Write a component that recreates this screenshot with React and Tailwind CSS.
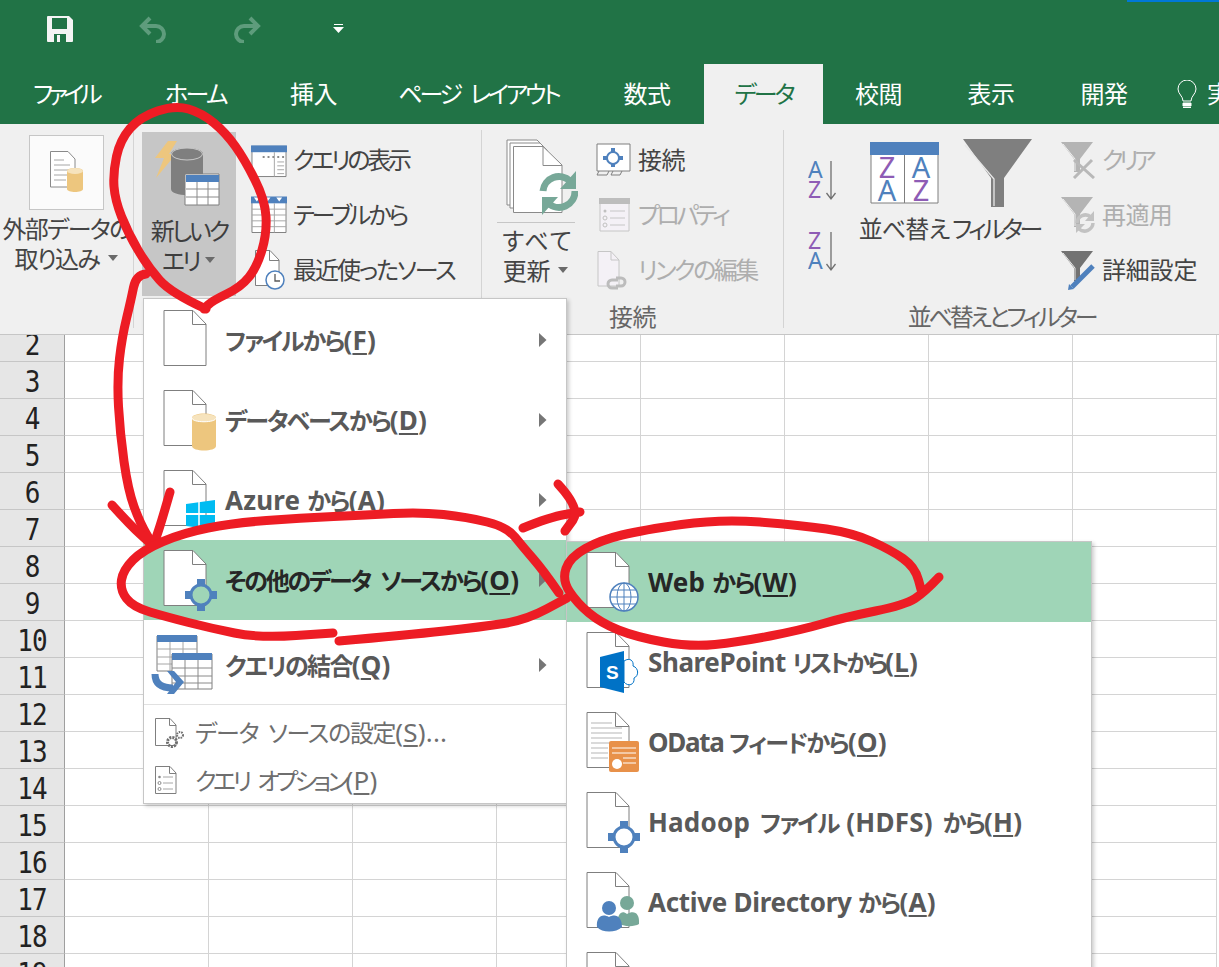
import React from "react";

const FONT = "font-['Noto_Sans','Noto_Sans_CJK_JP',sans-serif] [font-feature-settings:'palt']";
const ROWS = [2, 3, 4, 5, 6, 7, 8, 9, 10, 11, 12, 13, 14, 15, 16, 17, 18, 19];
const COLS = [0, 1, 2, 3, 4, 5, 6, 7];
const TABS = [
  { label: "ファイル", w: "w-[131px]", tr: "tracking-[-4.500px]" },
  { label: "ホーム", w: "w-[129px]", tr: "tracking-[-2.500px]" },
  { label: "挿入", w: "w-[107px]", tr: "tracking-[-0.6px]" },
  { label: "ページ レイアウト", w: "w-[223px]", tr: "tracking-[-3.200px] [word-spacing:7px]" },
  { label: "数式", w: "w-[114px]", tr: "tracking-[-0.6px]" },
  { label: "データ", w: "w-[119px]", tr: "tracking-[-3px]", active: true },
  { label: "校閲", w: "w-[111px]", tr: "tracking-[-0.6px]" },
  { label: "表示", w: "w-[114px]", tr: "tracking-[-0.6px]" },
  { label: "開発", w: "w-[112px]", tr: "tracking-[-0.6px]" },
];

// smooth line through hand-picked points, for the red marker strokes
const smooth = (pts) => {
  let d = `M${pts[0][0]} ${pts[0][1]}`;
  for (let i = 1; i < pts.length - 1; i++) {
    const mx = (pts[i][0] + pts[i + 1][0]) / 2;
    const my = (pts[i][1] + pts[i + 1][1]) / 2;
    d += ` Q${pts[i][0]} ${pts[i][1]} ${mx} ${my}`;
  }
  const last = pts[pts.length - 1];
  return `${d} L${last[0]} ${last[1]}`;
};

const STROKES = [
  [[206, 309], [171, 293], [148, 267], [128, 233], [115, 200], [113, 173], [120, 140], [140, 117], [175, 105], [202, 113], [226, 133], [245, 160], [265, 200], [267, 233], [257, 267], [241, 287], [212, 301], [204, 309]],
  [[146, 274], [136, 275], [131, 300], [122, 337], [117, 380], [120, 433], [128, 490], [140, 523], [153, 545]],
  [[112, 505], [130, 525], [152, 545]],
  [[170, 492], [162, 520], [155, 541]],
  [[559, 593], [543, 570], [523, 547], [507, 527], [467, 517], [420, 512], [367, 515], [300, 518], [233, 523], [183, 533], [143, 550], [123, 570], [120, 590], [133, 607], [167, 617], [210, 628], [259, 638], [333, 633]],
  [[339, 641], [407, 635], [481, 627], [526, 620], [567, 598]],
  [[523, 528], [550, 517], [580, 512]],
  [[558, 484], [581, 509], [565, 531]],
  [[939, 577], [925, 592], [905, 605], [846, 617], [801, 630], [739, 642], [691, 647], [636, 637], [601, 623], [577, 603], [562, 580], [570, 557], [601, 540], [643, 530], [720, 519], [800, 525], [853, 533], [891, 550], [915, 567], [922, 593]],
];

const Tri = ({ className = "" }) => (
  <svg width="12" height="7" viewBox="0 0 12 7" className={`inline-block ${className}`}>
    <path d="M1 0H11L6 6Z" fill="#6a6a6a" />
  </svg>
);

const Arrow = () => (
  <svg width="8" height="14" viewBox="0 0 8 14" className="ml-auto mr-[19px] shrink-0">
    <path d="M0 0L7.5 7L0 14Z" fill="#767676" />
  </svg>
);

const DocBase = () => (
  <>
    <path d="M1 5.5H30L43 19V60.5H1Z" fill="#fff" stroke="#7f7f7f" />
    <path d="M29.5 5.5V19.5H43" fill="none" stroke="#7f7f7f" />
  </>
);

const Hub = ({ fill = "#fff" }) => (
  <>
    <path d="M34 34h8v6h-8zM34 60h8v6h-8zM22 46h6v8h-6zM48 46h6v8h-6z" fill="#4f81bd" />
    <circle cx="38" cy="50" r="10" fill={fill} stroke="#4f81bd" strokeWidth="3" />
  </>
);

const ItemIcon = ({ children }) => (
  <svg width="56" height="70" viewBox="0 0 56 70" className="shrink-0">
    <DocBase />
    {children}
  </svg>
);

const MergeIcon = () => (
  <svg width="56" height="70" viewBox="0 0 56 70" className="shrink-0 overflow-visible">
    <path d="M-6 6H34V41H-6Z" fill="#fff" stroke="#7f7f7f" />
    <rect x="-6" y="5" width="40" height="7" fill="#4f81bd" />
    <path d="M-6 19H34M-6 27H34M-6 34H34M7 12V41M20 12V41" stroke="#a6a6a6" fill="none" />
    <path d="M9 24H49V59H9Z" fill="#fff" stroke="#7f7f7f" />
    <rect x="9" y="23" width="40" height="7" fill="#4f81bd" />
    <path d="M9 38H49M9 46H49M9 53H49M22 30V59M35 30V59" stroke="#8a8a8a" fill="none" />
    <path d="M-8 44C-8 55 0 58 10 58" fill="none" stroke="#4f81bd" strokeWidth="7" />
    <path d="M4 41H11L21 52L11 64H4L13 52Z" fill="#4f81bd" />
  </svg>
);

const SmallDoc = ({ children }) => (
  <svg width="30" height="34" viewBox="0 0 30 34" className="shrink-0">
    <path d="M.5 3.5H15L21 10V30.5H.5Z" fill="#fff" stroke="#7f7f7f" />
    <path d="M14.5 3.5V10.5H21" fill="none" stroke="#7f7f7f" />
    {children}
  </svg>
);

// latin runs sit larger than the kana next to them
const L = ({ children, tr = "tracking-[0.2px]" }) => <span className={`text-[26px] ${tr}`}>{children}</span>;

const Key = ({ k, rest = ")" }) => (
  <span className="text-[26px] tracking-[0.2px]">
    (<span className="underline underline-offset-[3px]">{k}</span>
    {rest}
  </span>
);

const MenuItem = ({ icon, children, arrow, active, className = "h-[80px]", tr = "tracking-[-1.700px]" }) => (
  <div className={`flex items-center pl-[19px] ${className} ${active ? "bg-[#9fd5b7] text-[#262626]" : "text-[#595959]"}`}>
    {icon}
    <div className={`ml-[6px] whitespace-nowrap text-[24px] font-bold ${tr}`}>{children}</div>
    {arrow && <Arrow />}
  </div>
);

const SmallItem = ({ icon, children, tr }) => (
  <div className={`flex h-[48px] items-center pl-[11px] text-[24px] text-[#6e6e6e] ${tr}`}>
    {icon}
    <div className="ml-[10px] whitespace-nowrap">{children}</div>
  </div>
);

const RibbonRow = ({ icon, text, dim, tr = "tracking-[-0.6px]" }) => (
  <div className={`flex h-[55px] items-center whitespace-nowrap text-[24px] ${tr} ${dim ? "text-[#aeaeae]" : "text-[#444]"}`}>
    <div className="flex w-[36px] shrink-0 justify-center">{icon}</div>
    <span className="ml-[6px]">{text}</span>
  </div>
);

const IconQuery = () => (
  <svg width="37" height="36" viewBox="0 0 37 36">
    <path d="M1 4H36V35H1Z" fill="#fff" stroke="#7f7f7f" />
    <rect x="0" y="3" width="37" height="7" fill="#4f81bd" />
    <path d="M12 14h2v2h-2zM17 14h2v2h-2zM22 14h2v2h-2zM27 14h2v2h-2zM32 14h2v2h-2z" fill="#8a8a8a" />
    <path d="M24 10V35M27 20H34M27 24H34M27 28H34M27 32H34" stroke="#a6a6a6" fill="none" />
  </svg>
);

const IconTable = () => (
  <svg width="37" height="38" viewBox="0 0 37 38">
    <path d="M1 1H36V37H1Z" fill="#fff" stroke="#7f7f7f" />
    <rect x="0" y="0" width="37" height="7" fill="#4f81bd" />
    <path d="M3 1H9L6 5ZM14 1H20L17 5ZM26 1H32L29 5Z" fill="#fff" />
    <path d="M1 13H36M1 19H36M1 25H36M1 31H36M12 7V37M24 7V37" stroke="#a6a6a6" fill="none" />
  </svg>
);

const IconRecent = () => (
  <svg width="36" height="42" viewBox="0 0 36 42">
    <path d="M4.5 1.5H19L28 11V36.5H4.5Z" fill="#fff" stroke="#7f7f7f" />
    <path d="M18.5 1.5V11.5H28" fill="none" stroke="#7f7f7f" />
    <circle cx="24" cy="31" r="9" fill="#fff" stroke="#4f81bd" strokeWidth="1.5" />
    <path d="M24 25V32H29" fill="none" stroke="#595959" strokeWidth="1.3" />
  </svg>
);

const IconConn = () => (
  <svg width="36" height="34" viewBox="0 0 36 34">
    <path d="M1 1H34V28H1Z" fill="#fff" stroke="#7f7f7f" />
    <path d="M3 28L1 32H11L13 28M17 28L15 32H24L26 28" fill="none" stroke="#7f7f7f" />
    <path d="M15 5h4v5h-4zM15 19h4v5h-4zM7 13h5v4H7zM22 13h5v4h-5z" fill="#4f81bd" />
    <circle cx="17" cy="15" r="6" fill="#fff" stroke="#4f81bd" strokeWidth="2" />
  </svg>
);

const IconProps = () => (
  <svg width="31" height="34" viewBox="0 0 31 34">
    <path d="M1 1H30V33H1Z" fill="#f4f1f6" stroke="#c6c6c6" />
    <rect x="0" y="0" width="31" height="6" fill="#bdbdbd" />
    <circle cx="6" cy="13" r="1.5" fill="#c0c0c0" />
    <circle cx="6" cy="20" r="2" fill="none" stroke="#c0c0c0" />
    <circle cx="6" cy="27" r="2" fill="none" stroke="#c0c0c0" />
    <path d="M11 13H26M11 20H26M11 27H26" stroke="#c6c6c6" />
  </svg>
);

const IconLink = () => (
  <svg width="36" height="40" viewBox="0 0 36 40">
    <path d="M2 1.5H15L23 10V36H2Z" fill="#f4f1f6" stroke="#c6c6c6" />
    <path d="M15 1.5V10H23" fill="none" stroke="#c6c6c6" />
    <path d="M12 34a4 4 0 0 1 4-4H22M20 28h5a4 4 0 0 1 0 8H20M12 34a4 4 0 0 0 4 4H22" fill="none" stroke="#bcbcbc" strokeWidth="3" />
  </svg>
);

const IconRefreshAll = () => (
  <svg width="72" height="78" viewBox="0 0 72 78">
    <path d="M1 1H31L38 8V66H1Z" fill="#fff" stroke="#8a8a8a" />
    <path d="M4 4H34L41 11V69H4Z" fill="#fff" stroke="#8a8a8a" />
    <path d="M7.5 7.5H37L56 26V73.5H7.5Z" fill="#fff" stroke="#8a8a8a" />
    <path d="M37 7.5V26.5H56" fill="none" stroke="#8a8a8a" />
    <path d="M37 52A16 16 0 0 1 64 42M69 52A16 16 0 0 1 42 64" fill="none" stroke="#77a898" strokeWidth="7" />
    <path d="M70 32V50H54ZM36 76V58H52Z" fill="#77a898" />
  </svg>
);

const IconAZ = ({ flip }) => (
  <svg width="30" height="42" viewBox="0 0 30 42" className="block">
    <text x="0" y="18" fontFamily="Noto Sans" fontSize="23" fill={flip ? "#8e5cb5" : "#4f81bd"}>{flip ? "Z" : "A"}</text>
    <text x="0" y="38" fontFamily="Noto Sans" fontSize="23" fill={flip ? "#4f81bd" : "#8e5cb5"}>{flip ? "A" : "Z"}</text>
    <path d="M23 1V38M18.5 33L23 39L27.500 33" fill="none" stroke="#6f6f6f" strokeWidth="1.300" />
  </svg>
);

const IconSort = () => (
  <svg width="69" height="62" viewBox="0 0 69 62">
    <path d="M1 1H68V61H1Z" fill="#fff" stroke="#7f7f7f" />
    <rect x="0" y="0" width="69" height="13" fill="#4f81bd" />
    <path d="M34.500 13V61" stroke="#7f7f7f" />
    <g fontFamily="Noto Sans" fontSize="29" textAnchor="middle">
      <text x="17" y="36" fill="#8e5cb5">Z</text>
      <text x="17" y="59" fill="#4f81bd">A</text>
      <text x="51" y="36" fill="#4f81bd">A</text>
      <text x="51" y="59" fill="#8e5cb5">Z</text>
    </g>
  </svg>
);

const IconFilter = () => (
  <svg width="69" height="68" viewBox="0 0 69 68" className="ml-[3px]">
    <path d="M0 0H69L41 39V68H28V39Z" fill="#7f7f7f" />
    <path d="M2 6L31 40V67" fill="none" stroke="#e8e8e8" strokeWidth="1.300" />
  </svg>
);

const Funnel = ({ fill = "#b4b4b4", line = "#f0f0f0" }) => (
  <>
    <path d="M1 1H33L20 18V31H14V18Z" fill={fill} />
    <path d="M3 3L15 18V30" fill="none" stroke={line} strokeWidth="1" />
  </>
);

const IconClear = () => (
  <svg width="36" height="38" viewBox="0 0 36 38">
    <Funnel />
    <path d="M14 19L34 37M32 19L14 37" stroke="#b8b8b8" strokeWidth="3" />
  </svg>
);

const IconReapply = () => (
  <svg width="36" height="38" viewBox="0 0 36 38">
    <Funnel />
    <path d="M17 27A8.500 8.500 0 0 1 31 21M33 27A8.500 8.500 0 0 1 19 33" fill="none" stroke="#c2c2c2" strokeWidth="3.500" />
    <path d="M34 15V25H25ZM16 37V28H25Z" fill="#c2c2c2" />
  </svg>
);

const IconAdvanced = () => (
  <svg width="36" height="40" viewBox="0 0 36 40">
    <Funnel fill="#727272" line="#e8e8e8" />
    <path d="M33 16L12 37" stroke="#4f81bd" strokeWidth="5" />
    <path d="M8 40L9 34L14 39Z" fill="#4f81bd" />
  </svg>
);

export default function App() {
  return (
    <div className={`relative h-[967px] w-[1219px] overflow-hidden bg-white ${FONT}`}>
      {/* Quick access bar */}
      <div className="relative flex h-[64px] items-center bg-[#217346]">
        <div className="absolute right-0 top-0 h-[2px] w-[92px] bg-[#0078d7]" />
        <svg width="26" height="26" viewBox="0 0 26 26" className="ml-[47px] -mt-[6px]">
          <path d="M1 0H22L26 4V25A1 1 0 0 1 25 26H1A1 1 0 0 1 0 25V1A1 1 0 0 1 1 0Z" fill="#f4f4f4" />
          <rect x="5" y="2" width="15" height="11" fill="#217346" />
          <rect x="7" y="18" width="12" height="8" fill="#217346" />
          <rect x="10" y="19" width="3" height="7" fill="#f4f4f4" />
        </svg>
        <svg width="28" height="28" viewBox="0 0 28 28" className="ml-[66px] -mt-[6px]">
          <path d="M11 3L3 11L11 19M3 11H17A8 8 0 0 1 17 27" fill="none" stroke="#5e9c7c" strokeWidth="4" />
        </svg>
        <svg width="28" height="28" viewBox="0 0 28 28" className="ml-[66px] -mt-[6px]">
          <path d="M17 3L25 11L17 19M25 11H11A8 8 0 0 0 11 27" fill="none" stroke="#5e9c7c" strokeWidth="4" />
        </svg>
        <svg width="11" height="10" viewBox="0 0 11 10" className="ml-[72px] -mt-[6px]">
          <path d="M1 .5H10" stroke="#fff" />
          <path d="M0 3H11L5.500 9Z" fill="#fff" />
        </svg>
      </div>

      {/* Tabs */}
      <div className="flex h-[60px] items-stretch bg-[#217346] text-[24px] text-white">
        {TABS.map((t) => (
          <div
            key={t.label}
            className={`flex ${t.w} ${t.tr} shrink-0 items-center justify-center whitespace-nowrap ${t.active ? "bg-[#f0f0f0] text-[#217346]" : ""}`}
          >
            {t.label}
          </div>
        ))}
        <div className="flex items-center pl-[17px]">
          <svg width="20" height="29" viewBox="0 0 20 29">
            <path d="M6 21C6 16 1 14 1 9A9 9 0 0 1 19 9C19 14 14 16 14 21Z" fill="none" stroke="#fff" />
            <path d="M6 23H14V26H6ZM6 27.500H14" fill="#fff" stroke="#fff" />
          </svg>
          <span className="ml-[10px]">実</span>
        </div>
      </div>

      {/* Ribbon */}
      <div className="relative z-10 flex h-[211px] border-b border-[#c6c6c6] bg-[#f0f0f0] py-[6px] text-[#444]">
        <div className="flex w-[134px] shrink-0 flex-col items-center border-r border-[#d4d4d4] pt-[5px]">
          <div className="flex h-[75px] w-[75px] items-center justify-center border border-[#c6c6c6] bg-[#fbfbfb]">
            <svg width="34" height="44" viewBox="0 0 34 44">
              <path d="M.5 .5H18L25 8V36H.5Z" fill="#fff" stroke="#8a8a8a" />
              <path d="M4 9H14M4 14H20M4 19H20M4 24H20M4 29H16" stroke="#a6a6a6" />
              <path d="M17 20C17 16 33 16 33 20V38C33 42 17 42 17 38Z" fill="#edc67e" />
              <ellipse cx="25" cy="20" rx="8" ry="3" fill="#f6e3bd" />
            </svg>
          </div>
          <div className="mt-[4px] whitespace-nowrap text-center text-[24px] leading-[30px] tracking-[-1.700px]">
            外部データの
            <br />
            取り込み <Tri className="ml-[3px] mb-[6px]" />
          </div>
        </div>

        <div className="flex w-[348px] shrink-0 border-r border-[#d4d4d4] pl-[8px] pt-[2px]">
          <div className="flex h-[164px] w-[94px] shrink-0 flex-col items-center bg-[#c6c6c6] pt-[9px]">
            <svg width="70" height="72" viewBox="0 0 70 72" className="overflow-visible">
              <path d="M14 0H23L15 13H22L2 37L10 17H1Z" fill="#edc67e" />
              <path d="M17 13C17 5 49 5 49 13V48C49 56 17 56 17 48Z" fill="#7f7f7f" />
              <ellipse cx="33" cy="13" rx="15.500" ry="6" fill="#7f7f7f" stroke="#c9c9c9" />
              <path d="M31 33H65V64H31Z" fill="#fff" stroke="#7f7f7f" />
              <rect x="32" y="34" width="33" height="7" fill="#4f81bd" />
              <path d="M32 48H65M32 56H65M43 41V64M54 41V64" stroke="#8a8a8a" />
            </svg>
            <div className="mt-[3px] whitespace-nowrap text-center text-[24px] leading-[30px] tracking-[-3px] text-[#3e3e3e]">
              新しいク
              <br />
              エリ <Tri className="ml-[2px] mb-[6px]" />
            </div>
          </div>
          <div className="ml-[15px] flex flex-col">
            <RibbonRow icon={<IconQuery />} text="クエリの表示" tr="tracking-[-3.300px]" />
            <RibbonRow icon={<IconTable />} text="テーブルから" tr="tracking-[-3px]" />
            <RibbonRow icon={<IconRecent />} text="最近使ったソース" tr="tracking-[-2px]" />
          </div>
        </div>

        <div className="flex w-[302px] shrink-0 flex-col border-r border-[#d4d4d4]">
          <div className="flex pl-[15px] pt-[2px]">
            <div className="flex w-[78px] shrink-0 flex-col items-center">
              <div className="ml-[12px] mt-[7px]">
                <IconRefreshAll />
              </div>
              <div className="mt-[5px] h-px w-[78px] bg-[#c6c6c6]" />
              <div className="mt-[3px] whitespace-nowrap text-center text-[24px] leading-[30px] tracking-[-0.3px]">
                <span className="ml-[4px] tracking-[2px]">すべて</span>
                <br />
                更新 <Tri className="ml-[1px] mb-[6px]" />
              </div>
            </div>
            <div className="ml-[21px] flex flex-col">
              <RibbonRow icon={<IconConn />} text="接続" />
              <RibbonRow icon={<IconProps />} text="プロパティ" dim tr="tracking-[-3.500px]" />
              <RibbonRow icon={<IconLink />} text="リンクの編集" dim tr="tracking-[-2.500px]" />
            </div>
          </div>
          <div className="mt-auto flex h-[22px] items-center justify-center text-[24px] tracking-[-0.6px] text-[#666]">接続</div>
        </div>

        <div className="flex flex-1 flex-col">
          <div className="flex pl-[24px] pt-[2px]">
            <div className="flex w-[30px] shrink-0 flex-col gap-[29px] pt-[28px]">
              <IconAZ />
              <IconAZ flip />
            </div>
            <div className="ml-[20px] flex w-[92px] shrink-0 flex-col items-center">
              <div className="flex h-[82px] items-center">
                <IconSort />
              </div>
              <div className="whitespace-nowrap text-[24px] leading-[30px] tracking-[-0.9px]">並べ替え</div>
            </div>
            <div className="flex w-[92px] shrink-0 flex-col items-center">
              <div className="flex h-[82px] items-center">
                <IconFilter />
              </div>
              <div className="whitespace-nowrap text-[24px] leading-[30px] tracking-[-3.500px]">フィルター</div>
            </div>
            <div className="ml-[18px] flex flex-col">
              <RibbonRow icon={<IconClear />} text="クリア" dim tr="tracking-[-4.500px]" />
              <RibbonRow icon={<IconReapply />} text="再適用" dim />
              <RibbonRow icon={<IconAdvanced />} text="詳細設定" tr="tracking-[-0.2px]" />
            </div>
          </div>
          <div className="mt-auto flex h-[22px] items-center justify-center whitespace-nowrap text-[24px] tracking-[-3.300px] text-[#666]">並べ替えとフィルター</div>
        </div>
      </div>

      {/* Sheet */}
      <div className="-mt-[10px]">
        {ROWS.map((n) => (
          <div key={n} className="flex h-[37px]">
            <div className="flex w-[65px] shrink-0 items-center justify-center border-b border-r border-b-[#c6c6c6] border-r-[#9f9f9f] bg-[#e6e6e6] pt-[4px] font-['DejaVu_Sans_Mono',monospace] text-[26px] tracking-[-1px] text-[#222]">
              <span className="inline-block scale-y-115">{n}</span>
            </div>
            {COLS.map((c) => (
              <div key={c} className="w-[144px] shrink-0 border-b border-r border-[#d4d4d4]" />
            ))}
          </div>
        ))}
      </div>

      {/* Menu: new query */}
      <div className="absolute left-[143px] top-[298px] z-20 h-[506px] w-[424px] border border-[#c6c6c6] bg-white pt-px shadow-[2px_2px_4px_rgba(0,0,0,0.2)]">
        <MenuItem icon={<ItemIcon />} arrow tr="tracking-[-2px]">
          ファイルから
          <Key k="F" />
        </MenuItem>
        <MenuItem
          arrow
          tr="tracking-[-2px]"
          icon={
            <ItemIcon>
              <path d="M29 33C29 27 53 27 53 33V61C53 67 29 67 29 61Z" fill="#edc67e" />
              <ellipse cx="41" cy="33" rx="12" ry="4" fill="#f6e3bd" />
              <path d="M29 33C29 38 53 38 53 33" fill="none" stroke="#fff" />
            </ItemIcon>
          }
        >
          データベースから
          <Key k="D" />
        </MenuItem>
        <MenuItem
          arrow
          icon={
            <ItemIcon>
              <path d="M23 39L52 35V48H23ZM23 50H52V65L23 61Z" fill="#00bcf2" />
              <path d="M36 37V63" stroke="#fff" strokeWidth="1.500" />
            </ItemIcon>
          }
        >
          <L>Azure </L>から
          <Key k="A" />
        </MenuItem>
        <MenuItem
          active
          arrow
          tr="tracking-[-2.200px] [word-spacing:6px]"
          icon={
            <ItemIcon>
              <Hub fill="#9fd5b7" />
            </ItemIcon>
          }
        >
          その他のデータ ソースから
          <Key k="O" />
        </MenuItem>
        <MenuItem icon={<MergeIcon />} arrow className="h-[84px] pt-[6px]">
          クエリの結合
          <Key k="Q" />
        </MenuItem>
        <div className="h-px bg-[#e1e1e1]" />
        <div className="pt-[3px]">
          <SmallItem
            tr="tracking-[-1.300px] [word-spacing:5px]"
            icon={
              <SmallDoc>
                <circle cx="17" cy="27" r="4.500" fill="none" stroke="#6e6e6e" strokeWidth="3" strokeDasharray="2 1" />
                <circle cx="25" cy="20" r="3" fill="none" stroke="#6e6e6e" strokeWidth="2" strokeDasharray="1.500 1" />
              </SmallDoc>
            }
          >
            データ ソースの設定
            <Key k="S" rest=")..." />
          </SmallItem>
          <SmallItem
            tr="tracking-[-3.500px] [word-spacing:6px]"
            icon={
              <SmallDoc>
                <circle cx="4.500" cy="14" r="1.300" fill="#8a8a8a" />
                <circle cx="4.500" cy="20" r="1.500" fill="none" stroke="#8a8a8a" />
                <circle cx="4.500" cy="26" r="1.500" fill="none" stroke="#8a8a8a" />
                <path d="M8 14H18M8 20H18M8 26H18" stroke="#a6a6a6" />
              </SmallDoc>
            }
          >
            クエリ オプション
            <Key k="P" />
          </SmallItem>
        </div>
      </div>

      {/* Menu: other sources */}
      <div className="absolute left-[566px] top-[541px] z-30 h-[460px] w-[526px] border border-[#c6c6c6] bg-white shadow-[2px_2px_4px_rgba(0,0,0,0.2)]">
        <MenuItem
          active
          icon={
            <ItemIcon>
              <circle cx="38" cy="50" r="14" fill="#fff" stroke="#4f81bd" strokeWidth="1.500" />
              <path d="M24 50H52M26 43H50M26 57H50M38 36V64" stroke="#4f81bd" />
              <ellipse cx="38" cy="50" rx="7" ry="14" fill="none" stroke="#4f81bd" />
            </ItemIcon>
          }
        >
          <L>Web </L>から
          <Key k="W" />
        </MenuItem>
        <MenuItem
          tr="tracking-[-3px]"
          icon={
            <ItemIcon>
              <path d="M38 34C44 30 48 34 47 39C53 41 53 49 48 51C49 58 42 60 38 55Z" fill="#fff" stroke="#0072c6" />
              <path d="M14 30L38 24V66L14 60Z" fill="#0072c6" />
              <text x="20" y="52" fontFamily="Liberation Sans" fontWeight="700" fontSize="19" fill="#fff">S</text>
            </ItemIcon>
          }
        >
          <L tr="tracking-[-0.4px]">SharePoint </L>リストから
          <Key k="L" />
        </MenuItem>
        <MenuItem
          icon={
            <ItemIcon>
              <path d="M5 16H26M5 21H36M5 26H36M5 31H36M5 36H36M5 41H22M5 46H22M5 51H22" stroke="#b5b5b5" />
              <rect x="23" y="34" width="30" height="31" rx="2" fill="#e8914a" />
              <path d="M26 41H50M26 46H50M37 51H50M37 56H50" stroke="#fff" />
              <circle cx="31" cy="57" r="5" fill="#fff" />
            </ItemIcon>
          }
        >
          <L tr="tracking-[-1.300px]">OData </L>フィードから
          <Key k="O" />
        </MenuItem>
        <MenuItem
          tr="tracking-[-1.700px] [word-spacing:3px]"
          icon={
            <ItemIcon>
              <Hub />
            </ItemIcon>
          }
        >
          <L>Hadoop </L>ファイル <L>(HDFS) </L>から
          <Key k="H" />
        </MenuItem>
        <MenuItem
          icon={
            <ItemIcon>
              <circle cx="41" cy="36" r="7" fill="#77a898" />
              <path d="M31 56C32 46 36 43 41 47C48 43 54 46 53 57C48 60 38 60 31 56Z" fill="#77a898" />
              <circle cx="23" cy="41" r="7" fill="#4f81bd" />
              <path d="M11 60C10 50 16 46 23 50C30 46 36 50 36 60C30 66 16 66 11 60Z" fill="#4f81bd" />
            </ItemIcon>
          }
        >
          <L tr="tracking-[-0.300px]">Active Directory </L>から
          <Key k="A" />
        </MenuItem>
        <MenuItem icon={<ItemIcon />} />
      </div>

      {/* Red marker annotations */}
      <svg width="1219" height="967" viewBox="0 0 1219 967" className="pointer-events-none absolute left-0 top-0 z-40">
        {STROKES.map((pts, i) => (
          <path key={i} d={smooth(pts)} fill="none" stroke="#ed1c24" strokeWidth="9" strokeLinecap="round" strokeLinejoin="round" />
        ))}
      </svg>
    </div>
  );
}
